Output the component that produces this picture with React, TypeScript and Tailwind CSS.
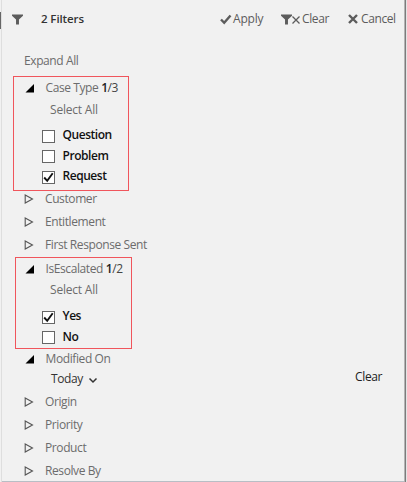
import React from "react";

function Funnel({ className }: { className: string }) {
  return (
    <svg viewBox="0 0 12 12" className={className} fill="#5c5c5c">
      <path d="M0 0.5h12v1.3L7.6 6v5.5H4.4V6L0 1.8z" />
    </svg>
  );
}

function Arrow({ open }: { open?: boolean }) {
  return (
    <svg viewBox="0 0 10 10" className="h-[10px] w-[10px] shrink-0">
      {open ? (
        <path d="M9 1v8.500H0.500z" fill="#000" />
      ) : (
        <path d="M1.200 1l7.300 4-7.300 4z" fill="none" stroke="#555" strokeWidth="1.100" />
      )}
    </svg>
  );
}

type HeadProps = { label: string; count?: string; total?: string; open?: boolean; className?: string };

function Head({ label, count, total, open, className = "h-[23px] pl-[22px]" }: HeadProps) {
  return (
    <div className={`flex shrink-0 items-center gap-[11px] whitespace-nowrap text-[#6c6c6c] ${className}`}>
      <Arrow open={open} />
      <span>
        {label}
        {count && (
          <span className="text-[#444]">
            {" "}
            <b className="font-semibold text-[#222]">{count}</b>/{total}
          </span>
        )}
      </span>
    </div>
  );
}

function Option({ label, checked }: { label: string; checked?: boolean }) {
  return (
    <div className="flex h-[20.500px] shrink-0 items-center gap-[7.500px] font-semibold text-[#111]">
      <span className="mt-[2px] flex h-[13px] w-[13px] items-center justify-center border border-[#666] bg-white">
        {checked && (
          <svg viewBox="0 0 11 11" className="h-[11px] w-[11px]" fill="none" stroke="#111" strokeWidth="1.900">
            <path d="M1.200 5.500l3 3.300 5.500-7.500" />
          </svg>
        )}
      </span>
      <span className="tracking-[-0.450px]">{label}</span>
    </div>
  );
}

export default function App() {
  return (
    <div className="flex h-[482px] w-[407px] overflow-hidden bg-[#f1f1f1] font-['Open_Sans','Noto_Sans',sans-serif] text-[12px] leading-[16px] tracking-[-0.400px]">
      <div className="flex w-[2px] shrink-0 flex-col border-r border-[#dedede] pt-[12px]">
        <div className="h-[17px] w-[1px] bg-[#666]" />
      </div>
      <div className="flex min-w-0 grow flex-col">
        <header className="flex h-[38px] shrink-0 items-center pl-[10px] text-[#5c5c5c]">
          <Funnel className="h-[11px] w-[11px]" />
          <span className="ml-[18px] w-[179px] text-[11.500px] font-semibold tracking-[-0.100px] text-[#333]">2 Filters</span>
          <span className="flex w-[61px] items-center gap-[1px] tracking-[-0.200px]">
            <svg viewBox="0 0 12 11" className="h-[11px] w-[12px]" fill="none" stroke="#5c5c5c" strokeWidth="2.400">
              <path d="M1 5.500l3.200 3.300L10.500 1.500" />
            </svg>
            Apply
          </span>
          <span className="flex w-[67px] items-center">
            <Funnel className="h-[11px] w-[11px]" />
            <svg viewBox="0 0 8 8" className="mr-[2px] mt-[1px] h-[8px] w-[8px]" fill="none" stroke="#5c5c5c" strokeWidth="1.300">
              <path d="M0.500 0.500l7 7M7.500 0.500l-7 7" />
            </svg>
            Clear
          </span>
          <span className="flex items-center gap-[3px]">
            <svg viewBox="0 0 10 10" className="h-[10px] w-[10px]" fill="none" stroke="#5c5c5c" strokeWidth="2.400">
              <path d="M1 1l8 8M9 1l-8 8" />
            </svg>
            Cancel
          </span>
        </header>
        <div className="mb-[3px] mt-[11px] flex h-[24px] shrink-0 items-center pl-[22px] text-[#6c6c6c]">Expand All</div>
        <section className="ml-[11px] flex h-[115px] w-[116px] shrink-0 flex-col border border-[#f0555c]">
          <Head open label="Case Type" count="1" total="3" className="h-[22px] pl-[10.500px]" />
          <div className="flex h-[22px] items-center pl-[36px] tracking-[-0.200px] text-[#6c6c6c]">Select All</div>
          <div className="mt-[4px] pl-[28px]">
            <Option label="Question" />
            <Option label="Problem" />
            <Option label="Request" checked />
          </div>
        </section>
        <div className="-mt-[4px]">
          <Head label="Customer" />
          <Head label="Entitlement" />
          <Head label="First Response Sent" />
        </div>
        <section className="ml-[13px] mt-[1px] flex h-[92px] w-[117px] shrink-0 flex-col border border-[#f0555c]">
          <Head open label="IsEscalated" count="1" total="2" className="h-[21px] pl-[8.500px]" />
          <div className="flex h-[22px] items-center pl-[34px] tracking-[-0.200px] text-[#6c6c6c]">Select All</div>
          <div className="mt-[5px] pl-[26px]">
            <Option label="Yes" checked />
            <Option label="No" />
          </div>
        </section>
        <Head open label="Modified On" className="h-[19px] pl-[22.500px]" />
        <div className="flex h-[22px] shrink-0 items-center pl-[49px] pr-[22px] text-[#333]">
          <span>Today</span>
          <svg viewBox="0 0 10 7" className="ml-[5px] mt-[2px] h-[7px] w-[10px]" fill="none" stroke="#333" strokeWidth="1.500">
            <path d="M1.500 1.500L5 5l3.500-3.500" />
          </svg>
          <span className="mb-[4px] ml-auto text-[#222]">Clear</span>
        </div>
        <Head label="Origin" />
        <Head label="Priority" />
        <Head label="Product" />
        <div className="h-[23px] shrink-0 border-b border-[#b8bec5]">
          <Head label="Resolve By" />
        </div>
      </div>
      <div className="flex w-[3px] shrink-0">
        <div className="w-[1px] bg-[#b4b4b4]" />
        <div className="w-[1px] bg-[#7c7c7c]" />
        <div className="w-[1px] bg-[#e4e4e4]" />
      </div>
    </div>
  );
}
